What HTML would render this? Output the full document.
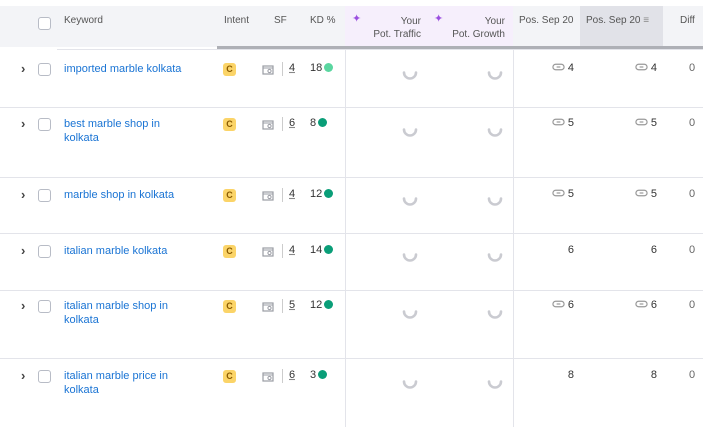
<!DOCTYPE html><html><head><style>
body{margin:0;width:703px;height:427px;overflow:hidden;background:#fff;font-family:"Liberation Sans",sans-serif;font-size:11px;color:#333;position:relative}
.a{position:absolute}
.hd{color:#555;font-size:10px}
.cb{position:absolute;width:11px;height:11px;border:1px solid #b8bcc6;border-radius:3px;background:#fff}
.kw{position:absolute;left:64px;color:#1a74d4;font-size:11px;line-height:14px}
.c{position:absolute;left:223px;width:13px;height:13px;background:#fbd468;border-radius:3px;color:#8a5a00;font-size:9px;font-weight:bold;text-align:center;line-height:13px}
.sp{position:absolute}
.dot{display:inline-block;width:9px;height:9px;border-radius:50%;vertical-align:-1px;margin-left:2px}
.n{position:absolute;text-align:right}
.vl{position:absolute;top:50px;width:1px;height:377px;background:#e3e4ea}
.hl{position:absolute;left:0;width:703px;height:1px;background:#e3e4ea}
.ch{position:absolute;left:21px;font-size:13px;font-weight:bold;color:#444;line-height:14px}
</style></head><body>
<svg width="0" height="0" style="position:absolute"><defs>
<symbol id="s" viewBox="0 0 16 16"><path d="M2 8.5 A6 6 0 0 0 14 8.5" fill="none" stroke="#cacbd1" stroke-width="2.6" stroke-linecap="round"/></symbol>
<symbol id="f" viewBox="0 0 12 12"><rect x="1" y="2" width="10" height="8" fill="none" stroke="#9a9ca4" stroke-width="1.2"/><line x1="1" y1="4" x2="11" y2="4" stroke="#9a9ca4"/><circle cx="7.5" cy="7" r="1.6" fill="none" stroke="#9a9ca4"/></symbol>
<symbol id="l" viewBox="0 0 14 10"><rect x="1" y="2" width="12" height="6" rx="3" fill="none" stroke="#999" stroke-width="1.3"/><line x1="5" y1="5" x2="9" y2="5" stroke="#999" stroke-width="1.3"/></symbol>
</defs></svg>
<div class="a" style="left:0;top:6px;width:703px;height:41px;background:#f3f4f7"></div>
<div class="a" style="left:345px;top:6px;width:168px;height:41px;background:#f6effc"></div>
<div class="a" style="left:580px;top:6px;width:83px;height:41px;background:#e1e2e8"></div>
<div class="a" style="left:217px;top:46px;width:486px;height:4px;background:#aeb0b6"></div>
<div class="a" style="left:57px;top:49px;width:646px;height:1px;background:#e3e4ea"></div>
<div class="cb" style="left:38px;top:17px"></div>
<div class="a hd" style="left:64px;top:15px">Keyword</div>
<div class="a hd" style="left:224px;top:15px">Intent</div>
<div class="a hd" style="left:274px;top:15px">SF</div>
<div class="a hd" style="left:310px;top:15px">KD %</div>
<div class="a" style="left:352px;top:12px;color:#9b4fe0;font-size:11px">✦</div>
<div class="a hd" style="left:360px;top:15px;width:61px;text-align:right;line-height:13px">Your<br>Pot. Traffic</div>
<div class="a" style="left:434px;top:12px;color:#9b4fe0;font-size:11px">✦</div>
<div class="a hd" style="left:440px;top:15px;width:65px;text-align:right;line-height:13px">Your<br>Pot. Growth</div>
<div class="a hd" style="left:519px;top:15px">Pos. Sep 20</div>
<div class="a hd" style="left:586px;top:15px">Pos. Sep 20 <span style="color:#888">≡</span></div>
<div class="a hd" style="left:680px;top:15px">Diff</div>
<div class="vl" style="left:345px"></div><div class="vl" style="left:513px"></div>
<div class="hl" style="top:107px"></div><div class="hl" style="top:177px"></div><div class="hl" style="top:233px"></div><div class="hl" style="top:290px"></div><div class="hl" style="top:358px"></div>

<!--R1-->
<div class="ch" style="top:62px">›</div><div class="cb" style="left:38px;top:63px"></div>
<div class="kw" style="top:62px">imported marble kolkata</div>
<div class="c" style="top:63px">C</div>
<svg class="a" style="left:262px;top:64px" width="12" height="12"><use href="#f"/></svg><div class="a" style="left:282px;top:62px;width:1px;height:14px;background:#ccc"></div><div class="a" style="left:289px;top:62px;text-decoration:underline dashed #888">4</div>
<div class="a" style="left:310px;top:62px">18<span class="dot" style="background:#5ad6a0"></span></div>
<svg class="sp" style="left:402px;top:64px" width="16" height="16"><use href="#s"/></svg><svg class="sp" style="left:487px;top:64px" width="16" height="16"><use href="#s"/></svg>
<div class="n" style="left:540px;top:62px;width:34px"><svg width="13" height="10" style="vertical-align:-1px"><use href="#l"/></svg> 4</div>
<div class="n" style="left:623px;top:62px;width:34px"><svg width="13" height="10" style="vertical-align:-1px"><use href="#l"/></svg> 4</div>
<div class="a" style="left:689px;top:62px;color:#666">0</div>
<!--R2-->
<div class="ch" style="top:117px">›</div><div class="cb" style="left:38px;top:118px"></div>
<div class="kw" style="top:117px">best marble shop in<br>kolkata</div>
<div class="c" style="top:118px">C</div>
<svg class="a" style="left:262px;top:119px" width="12" height="12"><use href="#f"/></svg><div class="a" style="left:282px;top:117px;width:1px;height:14px;background:#ccc"></div><div class="a" style="left:289px;top:117px;text-decoration:underline dashed #888">6</div>
<div class="a" style="left:310px;top:117px">8<span class="dot" style="background:#0a9e78"></span></div>
<svg class="sp" style="left:402px;top:121px" width="16" height="16"><use href="#s"/></svg><svg class="sp" style="left:487px;top:121px" width="16" height="16"><use href="#s"/></svg>
<div class="n" style="left:540px;top:117px;width:34px"><svg width="13" height="10" style="vertical-align:-1px"><use href="#l"/></svg> 5</div>
<div class="n" style="left:623px;top:117px;width:34px"><svg width="13" height="10" style="vertical-align:-1px"><use href="#l"/></svg> 5</div>
<div class="a" style="left:689px;top:117px;color:#666">0</div>
<!--R3-->
<div class="ch" style="top:188px">›</div><div class="cb" style="left:38px;top:189px"></div>
<div class="kw" style="top:188px">marble shop in kolkata</div>
<div class="c" style="top:189px">C</div>
<svg class="a" style="left:262px;top:190px" width="12" height="12"><use href="#f"/></svg><div class="a" style="left:282px;top:188px;width:1px;height:14px;background:#ccc"></div><div class="a" style="left:289px;top:188px;text-decoration:underline dashed #888">4</div>
<div class="a" style="left:310px;top:188px">12<span class="dot" style="background:#0a9e78"></span></div>
<svg class="sp" style="left:402px;top:190px" width="16" height="16"><use href="#s"/></svg><svg class="sp" style="left:487px;top:190px" width="16" height="16"><use href="#s"/></svg>
<div class="n" style="left:540px;top:188px;width:34px"><svg width="13" height="10" style="vertical-align:-1px"><use href="#l"/></svg> 5</div>
<div class="n" style="left:623px;top:188px;width:34px"><svg width="13" height="10" style="vertical-align:-1px"><use href="#l"/></svg> 5</div>
<div class="a" style="left:689px;top:188px;color:#666">0</div>
<!--R4-->
<div class="ch" style="top:244px">›</div><div class="cb" style="left:38px;top:245px"></div>
<div class="kw" style="top:244px">italian marble kolkata</div>
<div class="c" style="top:245px">C</div>
<svg class="a" style="left:262px;top:246px" width="12" height="12"><use href="#f"/></svg><div class="a" style="left:282px;top:244px;width:1px;height:14px;background:#ccc"></div><div class="a" style="left:289px;top:244px;text-decoration:underline dashed #888">4</div>
<div class="a" style="left:310px;top:244px">14<span class="dot" style="background:#0a9e78"></span></div>
<svg class="sp" style="left:402px;top:246px" width="16" height="16"><use href="#s"/></svg><svg class="sp" style="left:487px;top:246px" width="16" height="16"><use href="#s"/></svg>
<div class="n" style="left:540px;top:244px;width:34px">6</div>
<div class="n" style="left:623px;top:244px;width:34px">6</div>
<div class="a" style="left:689px;top:244px;color:#666">0</div>
<!--R5-->
<div class="ch" style="top:299px">›</div><div class="cb" style="left:38px;top:300px"></div>
<div class="kw" style="top:299px">italian marble shop in<br>kolkata</div>
<div class="c" style="top:300px">C</div>
<svg class="a" style="left:262px;top:301px" width="12" height="12"><use href="#f"/></svg><div class="a" style="left:282px;top:299px;width:1px;height:14px;background:#ccc"></div><div class="a" style="left:289px;top:299px;text-decoration:underline dashed #888">5</div>
<div class="a" style="left:310px;top:299px">12<span class="dot" style="background:#0a9e78"></span></div>
<svg class="sp" style="left:402px;top:303px" width="16" height="16"><use href="#s"/></svg><svg class="sp" style="left:487px;top:303px" width="16" height="16"><use href="#s"/></svg>
<div class="n" style="left:540px;top:299px;width:34px"><svg width="13" height="10" style="vertical-align:-1px"><use href="#l"/></svg> 6</div>
<div class="n" style="left:623px;top:299px;width:34px"><svg width="13" height="10" style="vertical-align:-1px"><use href="#l"/></svg> 6</div>
<div class="a" style="left:689px;top:299px;color:#666">0</div>
<!--R6-->
<div class="ch" style="top:369px">›</div><div class="cb" style="left:38px;top:370px"></div>
<div class="kw" style="top:369px">italian marble price in<br>kolkata</div>
<div class="c" style="top:370px">C</div>
<svg class="a" style="left:262px;top:371px" width="12" height="12"><use href="#f"/></svg><div class="a" style="left:282px;top:369px;width:1px;height:14px;background:#ccc"></div><div class="a" style="left:289px;top:369px;text-decoration:underline dashed #888">6</div>
<div class="a" style="left:310px;top:369px">3<span class="dot" style="background:#0a9e78"></span></div>
<svg class="sp" style="left:402px;top:373px" width="16" height="16"><use href="#s"/></svg><svg class="sp" style="left:487px;top:373px" width="16" height="16"><use href="#s"/></svg>
<div class="n" style="left:540px;top:369px;width:34px">8</div>
<div class="n" style="left:623px;top:369px;width:34px">8</div>
<div class="a" style="left:689px;top:369px;color:#666">0</div>
</body></html>
